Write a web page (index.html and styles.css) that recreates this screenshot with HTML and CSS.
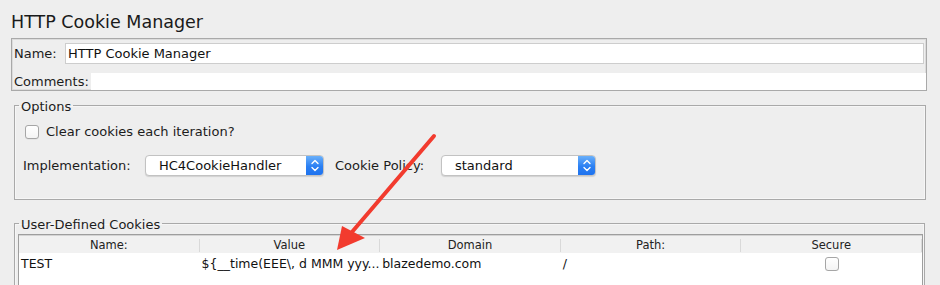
FILE: index.html
```html
<!DOCTYPE html>
<html>
<head>
<meta charset="utf-8">
<link rel="stylesheet" href="styles.css">
</head>
<body>
<div class="page">
  <h1 class="title">HTTP Cookie Manager</h1>
  <div class="name-panel">
    <div class="name-row">
      <span class="lbl lbl-name">Name:</span>
      <div class="text-input">HTTP Cookie Manager</div>
    </div>
    <div class="comments-row">
      <span class="lbl lbl-comments">Comments:</span>
      <div class="comments-area"></div>
    </div>
  </div>

  <fieldset class="group options">
    <legend class="group-title">Options</legend>
    <div class="check-row">
      <span class="checkbox"></span>
      <span class="check-label">Clear cookies each iteration?</span>
    </div>
    <div class="impl-row">
      <span class="impl-label">Implementation:</span>
      <div class="select sel-impl">
        <span class="sel-text">HC4CookieHandler</span>
        <span class="sel-btn"><svg width="18" height="21" viewBox="0 0 18 21"><path d="M6 8.5 L9 5.5 L12 8.5" fill="none" stroke="#fff" stroke-width="1.4" stroke-linecap="round" stroke-linejoin="round"/><path d="M6 12.5 L9 15.5 L12 12.5" fill="none" stroke="#fff" stroke-width="1.4" stroke-linecap="round" stroke-linejoin="round"/></svg></span>
      </div>
      <span class="policy-label">Cookie Policy:</span>
      <div class="select sel-policy">
        <span class="sel-text">standard</span>
        <span class="sel-btn"><svg width="18" height="21" viewBox="0 0 18 21"><path d="M6 8.5 L9 5.5 L12 8.5" fill="none" stroke="#fff" stroke-width="1.4" stroke-linecap="round" stroke-linejoin="round"/><path d="M6 12.5 L9 15.5 L12 12.5" fill="none" stroke="#fff" stroke-width="1.4" stroke-linecap="round" stroke-linejoin="round"/></svg></span>
      </div>
    </div>
  </fieldset>

  <fieldset class="group cookies">
    <legend class="group-title">User-Defined Cookies</legend>
    <div class="table">
      <div class="thead">
        <div class="th">Name:</div>
        <div class="th">Value</div>
        <div class="th">Domain</div>
        <div class="th">Path:</div>
        <div class="th">Secure</div>
      </div>
      <div class="trow">
        <div class="td">TEST</div>
        <div class="td">${__time(EEE\, d MMM yyy...</div>
        <div class="td">blazedemo.com</div>
        <div class="td">/</div>
        <div class="td td-center"><span class="checkbox"></span></div>
      </div>
    </div>
  </fieldset>

  <svg class="arrow" width="940" height="285" viewBox="0 0 940 285">
    <line x1="434" y1="136" x2="352" y2="232" stroke="#f23b2e" stroke-width="4" stroke-linecap="round"/>
    <polygon points="337,250 342,226 365,238" fill="#f23b2e"/>
  </svg>
</div>
</body>
</html>
```
FILE: styles.css
```css
html, body {
  margin: 0;
  padding: 0;
  background: #eeeeee;
  overflow: hidden;
}
.page {
  position: relative;
  width: 940px;
  height: 285px;
  overflow: hidden;
  font-family: "DejaVu Sans", sans-serif;
  font-size: 13px;
  color: #1c1c1c;
}
.title {
  margin: 0;
  padding: 12px 11px 0;
  font-size: 17.5px;
  font-weight: normal;
  line-height: 20px;
  height: 20px;
  color: #1a1a1a;
}
.name-panel {
  margin: 6px 13px 0 11px;
  height: 51px;
  border: 1px solid #a9a9a9;
  box-shadow: inset 0 0 0 1px #dcdcdc;
  display: flex;
  flex-direction: column;
}
.name-row {
  display: flex;
  align-items: center;
  padding: 4px 2px 0 2px;
  height: 21px;
}
.lbl {
  flex: none;
  line-height: 16px;
}
.lbl-name { width: 51px; }
.lbl-comments { width: 77px; }
.text-input {
  flex: 1;
  height: 19px;
  line-height: 19px;
  border: 1px solid #cdcdcd;
  background: #fff;
  padding-left: 2px;
  color: #111;
}
.comments-row {
  display: flex;
  align-items: center;
  margin-top: 9px;
  padding-left: 2px;
  height: 17px;
}
.comments-area {
  flex: 1;
  align-self: stretch;
  background: #fff;
}
.group {
  margin: 4px 14px 0 14px;
  border: 1px solid #a9a9a9;
  box-shadow: inset 0 0 0 1px #f6f6f6;
  min-width: 0;
}
.group-title {
  padding: 4px 2px 0;
  line-height: 16px;
  font-size: 13px;
  color: #1c1c1c;
}
.options {
  padding: 8px 8px 23px 8px;
}
.options .group-title { margin-left: -4px; }
.check-row {
  display: flex;
  align-items: center;
  height: 18px;
  padding-left: 2px;
}
.checkbox {
  display: inline-block;
  box-sizing: border-box;
  width: 14px;
  height: 14px;
  border: 1px solid #a6a6a6;
  border-radius: 3px;
  background: linear-gradient(#ffffff, #f4f4f4);
  box-shadow: 0 0.5px 0.5px rgba(0,0,0,0.08);
}
.check-label {
  margin-left: 7px;
  line-height: 16px;
}
.impl-row {
  display: flex;
  align-items: center;
  height: 21px;
  margin-top: 14px;
}
.impl-label { width: 122px; flex: none; }
.policy-label { width: 106px; flex: none; margin-left: 11px; }
.select {
  box-sizing: border-box;
  height: 21px;
  display: flex;
  align-items: stretch;
  border: 1px solid #c2c2c2;
  border-radius: 4px;
  background: #fff;
  box-shadow: 0 1px 1px rgba(0,0,0,0.12);
  overflow: hidden;
  flex: none;
}
.sel-impl { width: 179px; }
.sel-policy { width: 155px; }
.sel-text {
  flex: 1;
  line-height: 19px;
  padding-left: 13px;
  color: #111;
}
.sel-btn {
  flex: none;
  width: 18px;
  margin: -1px -1px -1px 0;
  background: linear-gradient(#6fb4fb, #2a7ff3 55%, #1d71ee);
  display: flex;
  align-items: center;
  justify-content: center;
}
.cookies {
  margin: 13px 15px 0 14px;
  padding: 1px 1px 0 3px;
}
.cookies .group-title { margin-left: 1px; }
.table {
  border: 1px solid #9e9e9e;
  border-bottom: none;
  background: #fff;
  height: 80px;
}
.thead {
  display: grid;
  grid-template-columns: repeat(5, 1fr);
  height: 17px;
  background: #f1f1f1;
  border-top: 1px solid #d4d4d4;
  align-items: center;
}
.th {
  font-size: 11.5px;
  text-align: center;
  color: #222;
  border-right: 1px solid #d9d9d9;
  line-height: 13px;
  margin-top: 2px;
}
.trow {
  display: grid;
  grid-template-columns: repeat(5, 1fr);
  height: 19px;
  align-items: center;
}
.td {
  font-size: 12.5px;
  line-height: 18px;
  padding-left: 2px;
  white-space: nowrap;
  overflow: hidden;
  color: #111;
  margin-top: 2px;
}
.td-center {
  display: flex;
  justify-content: center;
  align-items: center;
  padding-left: 0;
}
.arrow {
  position: absolute;
  left: 0;
  top: 0;
  pointer-events: none;
}
```
